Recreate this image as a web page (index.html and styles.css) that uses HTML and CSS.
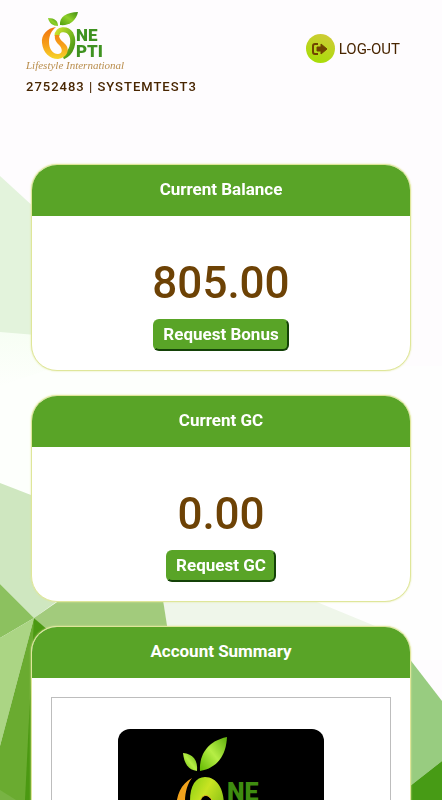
FILE: index.html
```html
<!DOCTYPE html>
<html lang="en">
<head>
<meta charset="utf-8">
<meta name="viewport" content="width=device-width, initial-scale=1">
<title>One Opti Dashboard</title>
<link rel="stylesheet" href="styles.css">
</head>
<body>
<svg class="backdrop" viewBox="0 0 442 800" preserveAspectRatio="none" aria-hidden="true">
  <defs>
    <linearGradient id="mist" x1="0" y1="0" x2="0" y2="1">
      <stop offset="0" stop-color="#f7fef4"/>
      <stop offset="1" stop-color="#fdfffc"/>
    </linearGradient>
  </defs>
  <rect width="442" height="800" fill="#fefcfe"/>
  <path fill="#fefefe" d="M0 366H442V660H0Z"/>
  <path fill="url(#mist)" d="M0 332H60V366L0 386Z"/>
  <path fill="#fdfffc" d="M0 386L60 366H200V602H0Z"/>
  <path fill="#e3f3dc" d="M0 176L60 231V337L0 332Z"/>
  <path fill="#cfe7c0" d="M0 483L31 495L120 530L56 602L34 618L0 584Z"/>
  <path fill="#eff6ea" d="M163 600H312L380 628H167Z"/>
  <path fill="#a2cb7c" d="M34 618L60 600H163L168 632H48Z"/>
  <path fill="#8cc15f" d="M0 584L34 618L0 638Z"/>
  <path fill="#abd584" d="M0 638L34 618L0 746Z"/>
  <path fill="#6aab30" d="M34 618L0 746V800H40Z"/>
  <path fill="#4b9912" d="M34 618L50 632V800H25Z"/>
  <path fill="#78b343" d="M0 790L16 800H0Z"/>
  <path fill="#98cc80" d="M405 653L442 701V761L405 790Z"/>
  <path fill="#479b15" d="M442 761L405 790V800H442Z"/>
</svg>

<div class="app">
  <header class="topbar">
    <div class="brand">
      <svg class="logo" viewBox="0 0 96 62" role="img" aria-label="One Opti Lifestyle International">
        <defs>
          <linearGradient id="leaf" x1="0" y1="1" x2="1" y2="0">
            <stop offset="0" stop-color="#4f9f10"/>
            <stop offset=".5" stop-color="#8fd02a"/>
            <stop offset="1" stop-color="#3f8c12"/>
          </linearGradient>
          <linearGradient id="orange" x1="0" y1="0" x2="0" y2="1">
            <stop offset="0" stop-color="#f0730f"/>
            <stop offset=".6" stop-color="#f7a31b"/>
            <stop offset="1" stop-color="#f6d62a"/>
          </linearGradient>
          <linearGradient id="lime" x1="0" y1="0" x2="1" y2="1">
            <stop offset="0" stop-color="#c9e02b"/>
            <stop offset=".6" stop-color="#72b41d"/>
            <stop offset="1" stop-color="#3f8c12"/>
          </linearGradient>
        </defs>
        <path fill="url(#leaf)" d="M34 14C33 6 41 1 52 1C50 10 43 15 34 14Z"/>
        <path fill="url(#leaf)" d="M22 7C29 7 32 10 32 15C27 15 23 12 22 7Z"/>
        <path fill="none" stroke="url(#lime)" stroke-width="5" d="M31 25C31 17 41 17 45 23C49 31 46 42 37 46"/>
        <path fill="url(#orange)" d="M30 16C21 17 15 24 16 32C17 42 24 48 32 48C41 47 44 39 40 34C37 30 33 29 33 24H29C28 29 31 32 34 35C37 39 36 43 32 43C26 43 23 37 23 31C23 24 26 19 30 16Z"/>
        <text class="logo-word" x="50" y="30">NE</text>
        <text class="logo-word" x="50" y="46">PTI</text>
        <text class="logo-script" x="0" y="58">Lifestyle International</text>
      </svg>
      <div class="account">2752483 | SYSTEMTEST3</div>
    </div>
    <a class="logout" href="#logout">
      <span class="logout-badge">
        <svg viewBox="0 0 16 14" aria-hidden="true">
          <path fill="none" stroke="#704400" stroke-width="2" d="M6 2H3Q1 2 1 4V10Q1 12 3 12H6"/>
          <path fill="#704400" stroke="#704400" stroke-linejoin="round" d="M5 5H9V2L15 7L9 12V9H5Z"/>
        </svg>
      </span>
      <span>LOG-OUT</span>
    </a>
  </header>

  <main class="cards">
    <section class="card">
      <h2 class="card-title">Current Balance</h2>
      <div class="card-body">
        <p class="amount">805.00</p>
        <button class="request" type="button">Request Bonus</button>
      </div>
    </section>
    <section class="card">
      <h2 class="card-title">Current GC</h2>
      <div class="card-body">
        <p class="amount">0.00</p>
        <button class="request" type="button">Request GC</button>
      </div>
    </section>
    <section class="card">
      <h2 class="card-title">Account Summary</h2>
      <div class="summary">
        <svg class="portrait" viewBox="0 0 206 206" role="img" aria-label="One Opti">
          <defs>
            <linearGradient id="leaf-dark" x1="0" y1="1" x2="1" y2="0">
              <stop offset="0" stop-color="#62b800"/>
              <stop offset=".5" stop-color="#b6ee45"/>
              <stop offset="1" stop-color="#5eae0c"/>
            </linearGradient>
            <linearGradient id="fruit" x1="0" y1="0" x2="1" y2="1">
              <stop offset="0" stop-color="#86cf12"/>
              <stop offset=".35" stop-color="#c9e422"/>
              <stop offset="1" stop-color="#57a80c"/>
            </linearGradient>
          </defs>
          <rect width="206" height="206" fill="#000"/>
          <path fill="url(#leaf-dark)" d="M82 42C81 25 90 12 109 8C108 27 99 39 82 42Z"/>
          <path fill="url(#leaf-dark)" d="M65 24C75 25 80 31 79 42C70 41 66 34 65 24Z"/>
          <path fill="#f0a21c" d="M74 49C63 55 58 66 58 82C60 100 70 108 84 108C72 98 67 88 67 73C67 62 70 54 74 49Z"/>
          <path fill="url(#fruit)" d="M72 72C72 56 78 48 87 48C99 48 106 60 106 76C106 92 97 104 84 108C92 100 95 94 95 84L92 98C79 92 72 84 72 72Z"/>
          <path fill="#000" stroke="#f4c226" d="M82 74C83 64 92 64 95 74C97 84 94 92 91 93C86 88 81 82 82 74Z"/>
          <text class="portrait-word" x="109" y="72">NE</text>
          <text class="portrait-word" x="109" y="102">PTI</text>
        </svg>
      </div>
    </section>
  </main>
</div>
</body>
</html>
```
FILE: styles.css
```css
* {
  box-sizing: border-box;
}

body {
  margin: 0;
  font-family: Roboto, "Liberation Sans", sans-serif;
  color: #482500;
}

.backdrop {
  position: fixed;
  inset: 0;
  width: 100%;
  height: 100%;
  z-index: -1;
}

.app {
  height: 100vh;
  overflow-y: auto;
  scrollbar-width: none;
}

.topbar {
  display: flex;
  justify-content: space-between;
  align-items: flex-start;
  padding: 11px 42px 0 26px;
}

.logo {
  display: block;
  width: 96px;
  height: 62px;
  overflow: visible;
}

.logo-word {
  font: 900 17px Roboto, "Liberation Sans", sans-serif;
  fill: #3f9220;
}

.logo-script {
  font: italic 11px "Liberation Serif", serif;
  fill: #b98d4c;
}

.account {
  margin-top: 6px;
  font-size: 13px;
  font-weight: 500;
  line-height: 16px;
  letter-spacing: 1px;
}

.logout {
  display: flex;
  align-items: center;
  gap: 4px;
  margin-top: 23px;
  font-size: 15px;
  line-height: 20px;
  color: inherit;
  text-decoration: none;
}

.logout-badge {
  display: flex;
  align-items: center;
  justify-content: center;
  width: 29px;
  height: 29px;
  border-radius: 50%;
  background: linear-gradient(20deg, #a2e000, #d3c93c);
}

.logout-badge svg {
  width: 16px;
  height: 14px;
}

.cards {
  display: flex;
  flex-direction: column;
  gap: 24px;
  padding: 69px 31px 24px;
}

.card {
  overflow: hidden;
  border: 1px solid #dfe69a;
  border-radius: 26px;
  background: #fff;
  box-shadow: 0 0 2px #dfe69a;
}

.card-title {
  margin: 0;
  padding: 12px 16px 15px;
  font-size: 17px;
  font-weight: 700;
  line-height: 24px;
  text-align: center;
  color: #fff;
  background: #59a427;
}

.card-body {
  display: flex;
  flex-direction: column;
  align-items: center;
  padding: 40px 16px 19px;
}

.amount {
  margin: 0 0 9px;
  font-size: 44px;
  font-weight: 500;
  line-height: 54px;
  color: #6d4205;
}

.request {
  height: 32px;
  padding: 0 8px 2px;
  border: 2px solid;
  border-color: #59a427 #144208 #144208 #59a427;
  border-radius: 6px;
  font: 700 17px/24px Roboto, "Liberation Sans", sans-serif;
  color: #fff;
  background: #59a427;
}

.summary {
  display: flex;
  justify-content: center;
  margin: 19px;
  padding: 31px;
  border: 1px solid #bdbdbd;
}

.portrait {
  width: 206px;
  border-radius: 12px;
}

.portrait-word {
  font: 900 25px Roboto, "Liberation Sans", sans-serif;
  fill: #3f8c10;
}
```
